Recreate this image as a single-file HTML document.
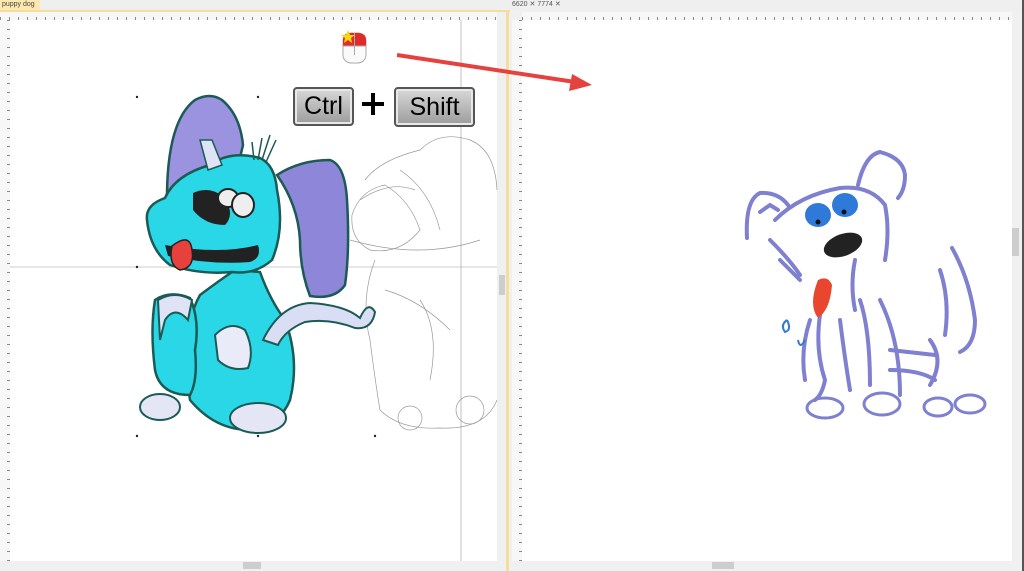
<!DOCTYPE html>
<html><head><style>
body{margin:0;width:1024px;height:571px;overflow:hidden;background:#f0f0f0;font-family:"Liberation Sans",sans-serif;position:relative}
.a{position:absolute}
.key{position:absolute;border:2px solid #555;border-radius:4px;background:linear-gradient(#d8d8d8,#9c9c9c);box-shadow:inset 0 0 0 2px #e8e8e8;font-size:25px;text-align:center;color:#000;box-sizing:border-box}
.ruler{background:#f7f7f7;background-image:repeating-linear-gradient(90deg,#888 0 1px,transparent 1px 9px)}
.vruler{background:#f7f7f7;background-image:repeating-linear-gradient(180deg,#888 0 1px,transparent 1px 9px)}
</style></head><body>
<div class="a" style="left:0;top:0;width:1024px;height:10px;background:#efefef"></div>
<div class="a" style="left:0;top:0;width:40px;height:10px;background:#fde9b0;font-size:7px;line-height:10px;color:#444">&nbsp;puppy dog ✕</div>
<div class="a" style="left:512px;top:0;width:65px;height:10px;font-size:7px;line-height:10px;color:#555">6620 ✕ 7774 ✕</div>
<div class="a" style="left:0;top:10px;width:510px;height:2px;background:#f5dd9c"></div>
<div class="a ruler" style="left:0;top:12px;width:497px;height:8px;background-size:9px 3px;background-repeat:repeat-x;background-position:0 5px"></div>
<div class="a vruler" style="left:0;top:20px;width:10px;height:541px;background-size:3px 9px;background-repeat:repeat-y;background-position:7px 0"></div>
<div class="a" style="left:10px;top:20px;width:487px;height:541px;background:#fff"></div>
<div class="a" style="left:497px;top:20px;width:9px;height:541px;background:#f0f0f0"></div>
<div class="a" style="left:499px;top:275px;width:6px;height:20px;background:#cdcdcd"></div>
<div class="a" style="left:0;top:561px;width:506px;height:10px;background:#f0f0f0"></div>
<div class="a" style="left:243px;top:562px;width:18px;height:7px;background:#cdcdcd"></div>
<div class="a" style="left:506px;top:10px;width:3px;height:561px;background:#f5dd9c"></div>
<div class="a ruler" style="left:522px;top:12px;width:490px;height:8px;background-size:9px 3px;background-repeat:repeat-x;background-position:0 5px"></div>
<div class="a vruler" style="left:512px;top:20px;width:10px;height:541px;background-size:3px 9px;background-repeat:repeat-y;background-position:7px 0"></div>
<div class="a" style="left:522px;top:20px;width:490px;height:541px;background:#fff"></div>
<div class="a" style="left:1012px;top:228px;width:7px;height:28px;background:#cdcdcd"></div>
<div class="a" style="left:712px;top:562px;width:22px;height:7px;background:#cdcdcd"></div>
<div class="a" style="left:1022px;top:0;width:2px;height:571px;background:#555"></div>
<svg class="a" style="left:0;top:0" width="1024" height="571">
<line x1="10" y1="267" x2="497" y2="267" stroke="#999" stroke-width="0.6"/>
<line x1="461" y1="20" x2="461" y2="561" stroke="#999" stroke-width="0.6"/>
<g fill="#222"><circle cx="137" cy="97" r="1.2"/><circle cx="258" cy="97" r="1.2"/><circle cx="137" cy="267" r="1.2"/><circle cx="137" cy="436" r="1.2"/><circle cx="258" cy="436" r="1.2"/><circle cx="375" cy="436" r="1.2"/></g>
<!-- ghost outline dog -->
<g fill="none" stroke="#999" stroke-width="0.7">
<path d="M365 180 Q380 160 420 150 Q440 130 470 140 Q495 150 497 190"/>
<path d="M352 215 Q360 190 385 185 Q410 200 420 230 Q400 255 370 250 Q350 240 352 215Z"/>
<path d="M375 260 Q360 300 370 340 Q375 380 380 410 Q400 430 440 428 Q485 430 497 400"/>
<path d="M400 170 Q430 190 440 230 M385 290 Q420 300 450 330 M420 300 Q440 330 430 380"/>
<path d="M350 240 Q420 260 480 240 M360 200 Q390 180 415 190"/>
<circle cx="470" cy="410" r="14"/><circle cx="410" cy="418" r="12"/>
</g>
<!-- cyan dog -->
<path d="M190 400 Q180 330 200 295 Q220 280 235 270 L260 272 Q270 300 285 320 Q300 360 290 400 Q280 425 250 430 Q215 430 190 400Z" fill="#2ad7e6" stroke="#1b5a55" stroke-width="2.5"/>
<path d="M155 300 Q170 290 190 298 Q200 320 195 350 Q198 380 190 395 Q160 395 155 370 Q150 330 155 300Z" fill="#2ad7e6" stroke="#1b5a55" stroke-width="2.5"/>
<path d="M158 300 Q175 290 192 300 L188 320 Q175 305 165 320 L160 340Z" fill="#dfe3f6" stroke="#1b5a55" stroke-width="2"/>
<path d="M263 340 Q280 305 310 303 Q345 305 360 318 Q368 300 375 312 Q372 330 355 328 Q330 318 305 322 Q285 330 278 345Z" fill="#d9def4" stroke="#1b5a55" stroke-width="2"/>
<path d="M215 335 Q230 320 245 330 Q255 350 248 368 Q230 372 218 360Z" fill="#e9ecf8" stroke="#1b5a55" stroke-width="2"/>
<path d="M167 193 Q168 120 195 100 Q210 92 222 100 Q240 115 243 145 L230 200Z" fill="#9b93e0" stroke="#1b5a55" stroke-width="2.5"/>
<path d="M147 220 Q145 205 165 198 Q175 175 210 165 Q230 150 260 158 Q275 165 277 190 Q285 230 272 260 Q255 275 232 272 Q200 275 170 265 Q150 250 147 220Z" fill="#2ad7e6" stroke="#1b5a55" stroke-width="2.5"/>
<path d="M200 140 L212 140 L222 165 L208 170Z" fill="#dfe3f6" stroke="#1b5a55" stroke-width="1.5"/>
<path d="M258 160 L262 138 M262 160 L270 135 M266 162 L276 140 M254 160 L252 142" stroke="#1b5a55" stroke-width="1.5"/>
<path d="M277 175 Q300 160 330 160 Q345 165 347 200 Q350 250 345 285 Q335 300 310 296 Q300 270 300 240 Q298 205 277 175Z" fill="#8e86d8" stroke="#1b5a55" stroke-width="2.5"/>
<path d="M193 193 Q210 185 225 198 Q235 215 225 225 Q205 225 193 210Z" fill="#222"/>
<ellipse cx="228" cy="198" rx="10" ry="9" fill="#eee" stroke="#222" stroke-width="2"/>
<ellipse cx="243" cy="205" rx="11" ry="12" fill="#eee" stroke="#222" stroke-width="2"/>
<path d="M165 245 Q220 255 258 245 Q262 258 250 262 Q210 265 168 256Z" fill="#222"/>
<path d="M172 246 Q190 232 192 250 Q195 268 180 270 Q168 265 172 246Z" fill="#e6413c" stroke="#222" stroke-width="1.5"/>
<ellipse cx="160" cy="407" rx="20" ry="13" fill="#e4e6f6" stroke="#1b5a55" stroke-width="2"/>
<ellipse cx="258" cy="418" rx="28" ry="15" fill="#e4e6f6" stroke="#1b5a55" stroke-width="2"/>
<!-- purple dog right -->
<g fill="none" stroke="#7f80cf" stroke-width="4" stroke-linecap="round">
<path d="M747 238 Q745 200 760 193 Q778 192 788 205 M760 212 L770 205 L778 210"/>
<path d="M858 185 Q865 155 880 152 Q903 158 905 175 Q905 190 898 198"/>
<path d="M775 220 Q800 195 840 188 Q870 185 885 205 Q890 230 885 260"/>
<path d="M770 240 Q790 260 800 275 M780 260 L800 280 M855 260 Q850 285 855 310"/>
<path d="M820 315 Q815 350 825 380 Q822 395 815 400 M840 320 Q845 360 850 390 M860 300 Q870 330 870 385"/>
<path d="M880 300 Q900 340 900 395 M890 350 L935 355 M890 370 Q920 370 935 380"/>
<path d="M952 248 Q970 280 975 320 Q975 345 960 352 M940 270 Q950 300 945 335 M930 340 Q945 360 930 385"/>
<path d="M810 320 Q800 350 805 380"/>
</g>
<g fill="none" stroke="#7f80cf" stroke-width="3">
<ellipse cx="825" cy="408" rx="18" ry="10"/><ellipse cx="882" cy="404" rx="18" ry="11"/><ellipse cx="938" cy="407" rx="14" ry="9"/><ellipse cx="970" cy="404" rx="15" ry="9"/>
</g>
<ellipse cx="818" cy="215" rx="13" ry="12" fill="#2f7ad8"/><ellipse cx="845" cy="205" rx="13" ry="12" fill="#2f7ad8"/>
<circle cx="818" cy="222" r="2.5" fill="#111"/><circle cx="844" cy="212" r="2.5" fill="#111"/>
<ellipse cx="843" cy="245" rx="20" ry="11" fill="#222" transform="rotate(-20 843 245)"/>
<path d="M818 280 Q828 275 832 285 Q830 310 818 318 Q808 305 818 280Z" fill="#e8462e"/>
<path d="M787 320 Q780 325 785 332 Q792 330 787 320" fill="none" stroke="#2f7ad8" stroke-width="2"/><path d="M798 340 Q800 350 805 340" fill="none" stroke="#2f7ad8" stroke-width="2"/>
<!-- mouse icon -->
<rect x="343" y="33" width="23" height="30" rx="8" fill="#fafafa" stroke="#aaa"/>
<path d="M343 46 L343 40 Q343 33 351 33 L358 33 Q366 33 366 40 L366 46Z" fill="#e02b2b"/>
<line x1="354.5" y1="33" x2="354.5" y2="55" stroke="#aaa"/>
<line x1="343" y1="46" x2="366" y2="46" stroke="#aaa"/>
<polygon points="348,30 350,35 355,35 351,38 352,43 348,40 344,43 345,38 341,35 346,35" fill="#f5d90c"/>
<line x1="397" y1="55" x2="575" y2="82" stroke="#e5413f" stroke-width="4"/>
<polygon points="592,85 572,74 569,91" fill="#e5413f"/>
<rect x="362" y="102" width="22" height="4" fill="#000"/><rect x="371" y="93" width="4" height="22" fill="#000"/>
</svg>
<div class="key" style="left:293px;top:87px;width:61px;height:39px;line-height:35px">Ctrl</div>
<div class="key" style="left:394px;top:87px;width:81px;height:40px;line-height:36px">Shift</div>
</body></html>
